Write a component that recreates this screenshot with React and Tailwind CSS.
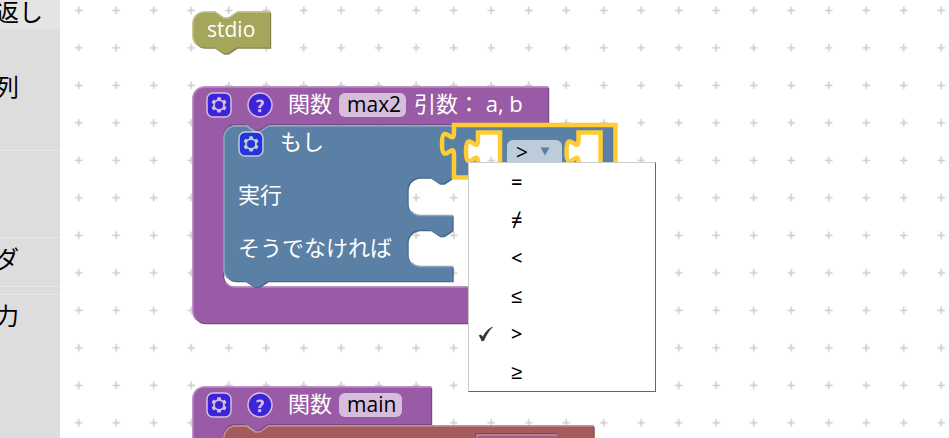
const FONT = "font-['Open_Sans','Noto_Sans_CJK_JP',sans-serif]";

const GEAR =
  'm4.203,7.296 0,1.368 -0.92,0.677 -0.11,0.41 0.9,1.559 0.41,0.11 1.043,-0.457 1.187,0.683 0.127,1.134 0.3,0.3 1.8,0 0.3,-0.299 0.127,-1.138 1.185,-0.682 1.046,0.458 0.409,-0.11 0.9,-1.559 -0.11,-0.41 -0.92,-0.677 0,-1.366 0.92,-0.677 0.11,-0.41 -0.9,-1.559 -0.409,-0.109 -1.046,0.458 -1.185,-0.682 -0.127,-1.138 -0.3,-0.299 -1.8,0 -0.3,0.3 -0.126,1.135 -1.187,0.682 -1.043,-0.457 -0.41,0.11 -0.899,1.559 0.108,0.409z';

const NOTCH = 'H 22.5 l 9,6 4.5,0 9,-6';
const TAB_BELOW = 'H 44 l -9,6 -4.5,0 -9,-6';
const NOTCH_BACK = 'l -9,6 -4.5,0 -9,-6 h -10.5 a 12,12 0 0 0 -12,12';

const COLORS = {
  purple: { base: '#995ba5', dark: '#7a4984', light: '#b88cc0' },
  blue: { base: '#5b80a5', dark: '#496684', light: '#8ca6c0' },
  olive: { base: '#a5a55b', dark: '#848449', light: '#c0c08c' },
  red: { base: '#a55b5b', dark: '#844949', light: '#c08c8c' },
};

function functionShape(width) {
  return {
    body: `M 0,12 A 12,12 0 0 1 12,0 H ${width} V 37.5 H 75.5 ${NOTCH_BACK} V 188 a 12,12 0 0 0 12,12 H 355 V 236.5 H 12 a 12,12 0 0 1 -12,-12 z`,
    shine: `M 3.5,233 A 12,12 0 0 1 0.5,224.5 V 12 A 11.5,11.5 0 0 1 12,0.5 H ${width} M 34,197 a 12,12 0 0 0 8.5,3.5 H 355`,
  };
}

const SHAPES = {
  stdio: {
    body: `M 0,12 A 12,12 0 0 1 12,0 ${NOTCH} H 77.5 V 36 ${TAB_BELOW} H 12 a 12,12 0 0 1 -12,-12 z`,
    shine: 'M 3.5,32.5 A 12,12 0 0 1 0.5,24 V 12 A 11.5,11.5 0 0 1 12,0.5 H 22.5 l 9,6 4.5,0 9,-6 H 77.5',
  },
  condition: {
    body: `M 0,12 A 12,12 0 0 1 12,0 ${NOTCH} H 229 V 52 ${NOTCH_BACK} V 77.5 a 12,12 0 0 0 12,12 H 229 V 104.5 ${NOTCH_BACK} V 128.5 a 12,12 0 0 0 12,12 H 229 V 155.5 ${TAB_BELOW} H 12 a 12,12 0 0 1 -12,-12 z`,
    shine:
      'M 3.5,152 A 12,12 0 0 1 0.5,143.5 V 12 A 11.5,11.5 0 0 1 12,0.5 H 22.5 l 9,6 4.5,0 9,-6 H 229 M 188.5,86.5 a 12,12 0 0 0 8.5,3.5 H 229 M 188.5,137.5 a 12,12 0 0 0 8.5,3.5 H 229',
  },
  variable: {
    body: `M 0,12 A 12,12 0 0 1 12,0 ${NOTCH} H 370 V 60 H 0 z`,
    shine: 'M 0.5,60 V 12 A 11.5,11.5 0 0 1 12,0.5 H 22.5 l 9,6 4.5,0 9,-6 H 370',
  },
};

function Shape({ shape, color }) {
  const c = COLORS[color];
  return (
    <svg className="pointer-events-none absolute left-0 top-0 size-px overflow-visible" aria-hidden="true">
      <g transform="translate(0.5 0.5)">
        <path d={shape.body} fill={c.dark} transform="translate(1.2 1.2)" />
        <path d={shape.body} fill={c.base} />
        <path d={shape.shine} fill="none" stroke={c.light} strokeWidth="1.5" strokeLinecap="round" />
      </g>
    </svg>
  );
}

function GearButton() {
  return (
    <button type="button" aria-label="設定" className="relative shrink-0">
      <svg viewBox="-0.667 -0.667 17.333 17.333" className="size-[26px] opacity-60" aria-hidden="true">
        <rect width="16" height="16" rx="4" fill="#00f" stroke="#fff" />
        <path d={GEAR} fill="#fff" />
        <circle cx="8" cy="8" r="2.7" fill="#00f" />
      </svg>
    </button>
  );
}

function HelpButton() {
  return (
    <button type="button" aria-label="ヘルプ" className="relative shrink-0">
      <svg viewBox="-0.667 -0.667 17.333 17.333" className="size-[26px] opacity-60" aria-hidden="true">
        <circle cx="8" cy="8" r="8" fill="#00f" stroke="#fff" />
        <path
          d="m6.8,10h2c0.003,-0.617 0.271,-0.962 0.633,-1.266 2.875,-2.405 0.607,-5.534 -3.765,-3.874v1.7c3.12,-1.657 3.698,0.118 2.336,1.25 -1.201,0.998 -1.201,1.528 -1.204,2.19z"
          fill="#fff"
        />
        <rect x="6.8" y="10.78" width="2" height="2" fill="#fff" />
      </svg>
    </button>
  );
}

function FunctionHeader({ name, inputClass, args }) {
  return (
    <div className="relative flex h-[38px] items-center pl-[14px]">
      <GearButton />
      <span className="w-[15px]" />
      <HelpButton />
      <label className="ml-[15px] flex items-center gap-[7px]">
        <span className="pb-1">関数</span>
        <input
          type="text"
          defaultValue={name}
          className={`h-6 rounded-md bg-[#d6bddb] pl-2 text-[21px] text-black outline-none ${inputClass}`}
        />
      </label>
      {args && <span className="ml-2 whitespace-pre pb-1">{args}</span>}
    </div>
  );
}

function Category({ label, className }) {
  return (
    <button
      type="button"
      className={`flex w-full shrink-0 items-center whitespace-nowrap text-2xl leading-6 text-black ${className}`}
    >
      <span className="-ml-[5px]">{label}</span>
    </button>
  );
}

function Separator() {
  return <hr className="h-px shrink-0 border-0 bg-[#e8e8e8]" />;
}

const OPERATORS = ['=', '≠', '<', '≤', '>', '≥'];

function OperatorMenu() {
  return (
    <div
      role="menu"
      aria-label="比較"
      className="absolute left-[408px] top-[162px] flex w-[188px] flex-col border border-b-[#666] border-l-[#ccc] border-r-[#666] border-t-[#ccc] bg-white font-['Noto_Sans',sans-serif]"
    >
      {OPERATORS.map((op) => (
        <button
          key={op}
          type="button"
          role="menuitemradio"
          aria-checked={op === '>'}
          className="flex h-[38px] items-center pl-2 text-xl font-medium text-black"
        >
          <span className="w-[34px]">
            {op === '>' && (
              <svg viewBox="0 0 18 18" className="size-[18px]" aria-hidden="true">
                <path d="M2 10.5 C3.5 9.5 4.8 10 5.6 12.2 C8 7.5 11 4 15.5 2 C11.5 6 9 10.5 6.8 15.5 L4.7 16 C4 13.5 3.2 12 2 10.5z" fill="#333" stroke="#333" strokeWidth="0.6" />
              </svg>
            )}
          </span>
          <span>{op}</span>
        </button>
      ))}
    </div>
  );
}

const SLOT_TAB = 'v 7.5 c 0,15 -12,-12 -12,11.25 s 12,-3.75 12,11.25';

function CompareBlock() {
  const outline =
    'M 0,0 H 161.5 V 52.5 H 0 V 30 c 0,-15 -12,12 -12,-11.25 s 12,3.75 12,-11.25 z ' +
    `M 24,7.5 ${SLOT_TAB} V 45 H 46 V 7.5 z ` +
    `M 124.5,7.5 ${SLOT_TAB} V 45 H 146.5 V 7.5 z`;
  return (
    <div className="absolute left-[394px] top-[125px] flex pl-[53px] pt-[15px]">
      <svg className="pointer-events-none absolute left-0 top-0 size-px overflow-visible" aria-hidden="true">
        <path d={outline} fill="#5b80a5" fillRule="evenodd" stroke="#fc3" strokeWidth="4.5" />
      </svg>
      <button
        type="button"
        aria-haspopup="menu"
        aria-expanded="true"
        className="relative flex h-7 w-[55px] items-center justify-between rounded-md bg-[#bdccdb] pb-1 pl-[9px] pr-3 text-[21px] text-black"
      >
        <span className="leading-6">&gt;</span>
        <svg viewBox="0 0 10 12" className="h-3 w-[10px]" aria-hidden="true">
          <path d="M0.5 1.5 H9.5 L5 9.5z" fill="#5b80a5" />
        </svg>
      </button>
    </div>
  );
}

export default function App() {
  return (
    <div className={`flex h-screen overflow-hidden bg-white ${FONT}`}>
      <nav aria-label="ツールボックス" className="flex w-[60px] shrink-0 flex-col overflow-hidden bg-[#ddd]">
        <Category label="返し" className="h-[30px] bg-[#e4e4e4] pb-[6px]" />
        <Category label="列" className="h-[120px] pb-[6px]" />
        <Separator />
        <div className="h-[86px] shrink-0" />
        <Separator />
        <Category label="ダ" className="h-12 pb-[6px]" />
        <Separator />
        <div className="h-[7px] shrink-0" />
        <Separator />
        <Category label="力" className="h-12 pb-[6px]" />
      </nav>

      <main className="relative min-w-0 flex-1 overflow-hidden text-[22px] text-white">
        <svg className="absolute inset-0 size-full" aria-hidden="true">
          <defs>
            <pattern id="grid" width="37.5" height="37.5" patternUnits="userSpaceOnUse">
              <path d="M15 10.3 H22.5 M18.7 6.5 V14" stroke="#ccc" strokeWidth="1.5" />
            </pattern>
          </defs>
          <rect width="100%" height="100%" fill="url(#grid)" />
        </svg>

        <div className="absolute left-[132px] top-[11px] flex h-[37px] w-[79px] items-center pl-[15px]">
          <Shape shape={SHAPES.stdio} color="olive" />
          <span className="relative text-[21px]">stdio</span>
        </div>

        <div className="absolute left-[132px] top-[86px]">
          <Shape shape={functionShape(355.5)} color="purple" />
          <FunctionHeader name="max2" inputClass="w-[67px]" args="引数： a, b" />
        </div>

        <div className="absolute left-[163px] top-[125px] flex flex-col gap-[15px] pl-[15px]">
          <Shape shape={SHAPES.condition} color="blue" />
          <div className="relative flex h-[38px] items-center gap-4">
            <GearButton />
            <span className="pb-[6px]">もし</span>
          </div>
          <div className="relative flex h-[38px] items-center pb-[6px]">実行</div>
          <div className="relative flex h-[38px] items-center pb-[6px]">そうでなければ</div>
        </div>

        <CompareBlock />

        <div className="absolute left-[132px] top-[386px]">
          <Shape shape={functionShape(238.5)} color="purple" />
          <FunctionHeader name="main" inputClass="w-[63px]" />
        </div>

        <div className="absolute left-[163px] top-[425px]">
          <Shape shape={SHAPES.variable} color="red" />
          <svg className="absolute left-[252px] top-2 h-10 w-[84px]" aria-hidden="true">
            <rect x="0" y="0" width="82" height="40" fill="#844949" />
            <rect x="1.5" y="1.5" width="80.5" height="40" fill="#a55b80" />
            <path d="M2 40 V2 H82" fill="none" stroke="#c08ca6" strokeWidth="1.5" />
          </svg>
        </div>

        <OperatorMenu />
      </main>
    </div>
  );
}
